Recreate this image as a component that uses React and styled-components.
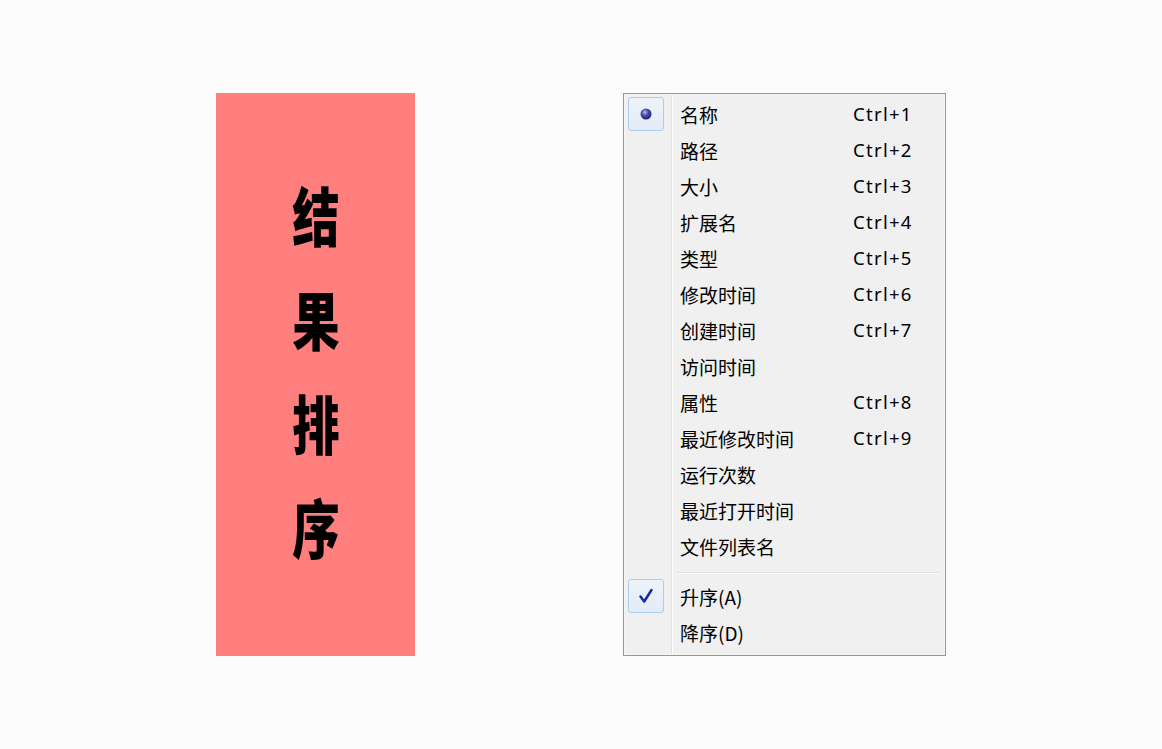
import React from "react";
import styled, { createGlobalStyle } from "styled-components";

const Global = createGlobalStyle`
  html, body { margin: 0; padding: 0; background: #fcfcfc; }
  body { font-family: "Noto Sans", "Noto Sans CJK SC", sans-serif; }
`;

const Page = styled.div`
  width: 1162px;
  height: 749px;
  box-sizing: border-box;
  padding: 93px 0 0 216px;
  display: flex;
  align-items: flex-start;
  gap: 208px;
`;

const Banner = styled.div`
  width: 199px;
  height: 563px;
  box-sizing: border-box;
  padding-bottom: 12px;
  background: #ff7f7f;
  display: flex;
  flex-direction: column;
  align-items: center;
  justify-content: center;
`;

const BigChar = styled.span`
  display: block;
  height: 104px;
  line-height: 104px;
  font-family: "Noto Sans CJK SC", sans-serif;
  font-weight: 900;
  font-size: 64px;
  color: #000;
  transform: scaleX(0.74);
`;

const Menu = styled.div`
  width: 323px;
  height: 563px;
  box-sizing: border-box;
  border: 1px solid #979797;
  padding: 2px;
  background-color: #f0f0f0;
  background-image: linear-gradient(
    to right,
    transparent 47px,
    #e2e3e3 47px,
    #e2e3e3 48px,
    #ffffff 48px,
    #ffffff 49px,
    transparent 49px
  );
  box-shadow: inset 0 0 0 1px #f5f5f5;
  display: flex;
  flex-direction: column;
`;

const Row = styled.div`
  height: 36px;
  display: grid;
  grid-template-columns: 54px 173px 1fr;
  align-items: center;
  font-family: "Noto Sans CJK SC", sans-serif;
  font-size: 19px;
  color: #000;
`;

const IconBox = styled.div`
  margin-left: 2px;
  width: 36px;
  height: 34px;
  box-sizing: border-box;
  border-radius: 3px;
  display: flex;
  align-items: center;
  justify-content: center;
  ${(p) =>
    p.$active
      ? `border: 1px solid #aeccf0; background: linear-gradient(#eef3fa, #e3ebf6);`
      : ``}
`;

const Label = styled.span`
  line-height: 1;
  white-space: nowrap;
`;

const Shortcut = styled.span`
  font-family: "Noto Sans", sans-serif;
  font-size: 18.5px;
  letter-spacing: 1.3px;
  line-height: 1;
  white-space: nowrap;
`;

const Separator = styled.div`
  height: 14px;
  box-sizing: border-box;
  padding: 8px 2px 0 50px;
  display: flex;
  align-items: flex-start;
  &::after {
    content: "";
    display: block;
    flex: 1;
    border-top: 1px solid #e0e0e0;
    border-bottom: 1px solid #ffffff;
    height: 0;
  }
`;

const Radio = () => (
  <svg width="14" height="14" viewBox="0 0 14 14">
    <defs>
      <radialGradient id="rg" cx="40%" cy="35%" r="65%">
        <stop offset="0%" stopColor="#b9bdf0" />
        <stop offset="45%" stopColor="#4a4fb0" />
        <stop offset="100%" stopColor="#1d2270" />
      </radialGradient>
    </defs>
    <circle cx="7" cy="7" r="5.5" fill="url(#rg)" />
  </svg>
);

const Check = () => (
  <svg width="18" height="18" viewBox="0 0 18 18">
    <path
      d="M3.5 9.5 L7.2 14.5 L14.5 3"
      fill="none"
      stroke="#1c2a9c"
      strokeWidth="2.5"
      strokeLinecap="round"
      strokeLinejoin="round"
    />
  </svg>
);

const items = [
  ["名称", "Ctrl+1", "radio"],
  ["路径", "Ctrl+2"],
  ["大小", "Ctrl+3"],
  ["扩展名", "Ctrl+4"],
  ["类型", "Ctrl+5"],
  ["修改时间", "Ctrl+6"],
  ["创建时间", "Ctrl+7"],
  ["访问时间", ""],
  ["属性", "Ctrl+8"],
  ["最近修改时间", "Ctrl+9"],
  ["运行次数", ""],
  ["最近打开时间", ""],
  ["文件列表名", ""],
];

const orderItems = [
  ["升序(A)", "check"],
  ["降序(D)", ""],
];

export default function App() {
  return (
    <>
      <Global />
      <Page>
        <Banner>
          {["结", "果", "排", "序"].map((c) => (
            <BigChar key={c}>{c}</BigChar>
          ))}
        </Banner>
        <Menu>
          {items.map(([label, sc, mark]) => (
            <Row key={label}>
              <IconBox $active={!!mark}>{mark === "radio" && <Radio />}</IconBox>
              <Label>{label}</Label>
              <Shortcut>{sc}</Shortcut>
            </Row>
          ))}
          <Separator />
          {orderItems.map(([label, mark]) => (
            <Row key={label}>
              <IconBox $active={!!mark}>{mark === "check" && <Check />}</IconBox>
              <Label>{label}</Label>
              <Shortcut />
            </Row>
          ))}
        </Menu>
      </Page>
    </>
  );
}
